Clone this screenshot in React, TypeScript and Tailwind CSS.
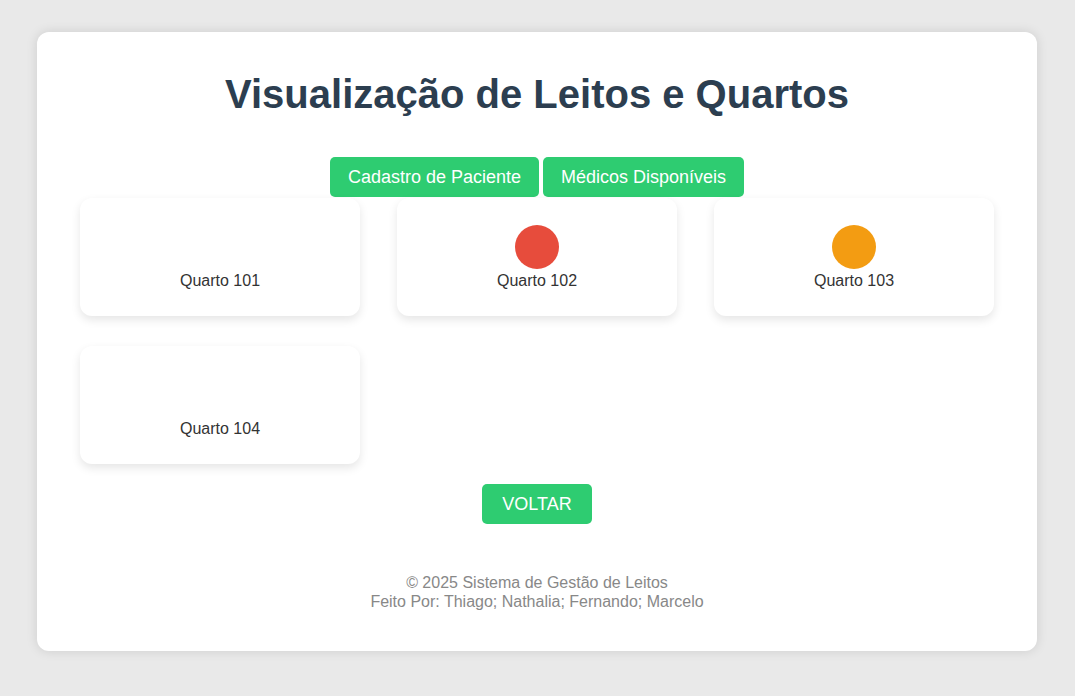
const rooms = [
  { name: 'Quarto 101', color: 'bg-transparent' },
  { name: 'Quarto 102', color: 'bg-[#e74c3c]' },
  { name: 'Quarto 103', color: 'bg-[#f39c12]' },
  { name: 'Quarto 104', color: 'bg-transparent' },
];

export default function App() {
  return (
    <div className="min-h-screen bg-[#e9e9e9] pt-8 font-['Liberation_Sans',Arial,sans-serif]">
      <div className="ml-[37px] w-[1000px] rounded-xl bg-white px-[43px] pb-[40px] shadow-[0_0_12px_rgba(0,0,0,0.12)]">
        <h1 className="pt-[39px] text-center text-[40px] leading-[46px] font-bold text-[#2c3e50]">
          Visualização de Leitos e Quartos
        </h1>

        {/* top navigation */}
        <div className="mt-[40px] flex justify-center gap-1">
          <button className="h-10 rounded-[5px] bg-[#2ecc71] px-[18px] text-[18px] text-white">
            Cadastro de Paciente
          </button>
          <button className="h-10 rounded-[5px] bg-[#2ecc71] px-[18px] text-[18px] text-white">
            Médicos Disponíveis
          </button>
        </div>

        <div className="mt-px grid grid-cols-3 gap-x-[37px] gap-y-[30px]">
          {rooms.map((r) => (
            <div
              key={r.name}
              className="flex h-[118px] flex-col items-center justify-center rounded-xl bg-white shadow-[0_4px_10px_rgba(0,0,0,0.1)]"
            >
              <div className={`mt-px h-11 w-11 rounded-full ${r.color}`} />
              <div className="mt-[3px] text-base leading-[18px] text-[#333]">{r.name}</div>
            </div>
          ))}
        </div>

        <div className="mt-5 flex justify-center">
          <button className="h-10 rounded-[5px] bg-[#2ecc71] px-5 text-[18px] text-white">VOLTAR</button>
        </div>

        <footer className="mt-[49px] text-center text-base leading-[19px] text-[#888]">
          <p>© 2025 Sistema de Gestão de Leitos</p>
          <p>Feito Por: Thiago; Nathalia; Fernando; Marcelo</p>
        </footer>
      </div>
    </div>
  );
}
